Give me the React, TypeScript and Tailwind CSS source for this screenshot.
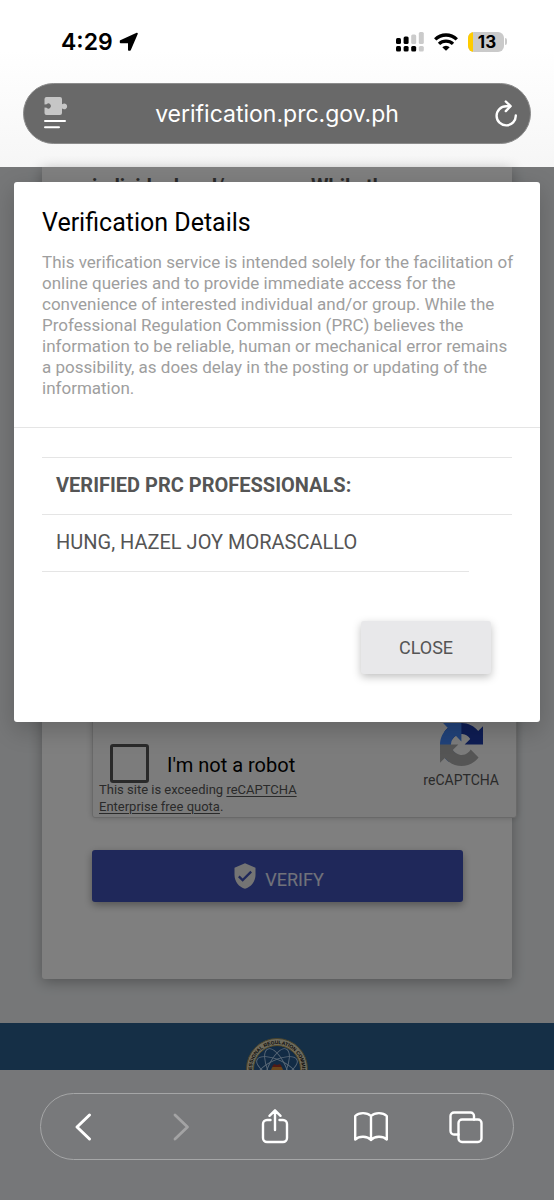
import React from "react";
import { MdVerifiedUser } from "react-icons/md";

function StatusBar() {
  return (
    <div className="flex h-[83px] items-center justify-between pl-[61px] pr-[47px]">
      <div className="flex items-center gap-1.5 text-black">
        <span className="font-['Inter'] text-[23px] font-semibold leading-7">4:29</span>
        <svg width="20" height="20" viewBox="0 0 20 20" fill="currentColor" stroke="currentColor" strokeWidth="1.6" strokeLinejoin="round" aria-hidden="true">
          <path d="M1.600 9 18 1.600 11 18h-1.200V10.400H1.600Z" />
        </svg>
      </div>
      <div className="flex items-center gap-2.5">
        <svg width="28" height="20" viewBox="0 0 28 20" aria-hidden="true">
          <g fill="#000">
            <rect x="0" y="6" width="5" height="6" rx="1.500" />
            <rect x="7.600" y="4.500" width="5" height="7.500" rx="1.500" />
            <rect x="0" y="14" width="5" height="5.500" rx="1.500" />
            <rect x="7.600" y="14" width="5" height="5.500" rx="1.500" />
            <rect x="15.200" y="14" width="5" height="5.500" rx="1.500" />
          </g>
          <g fill="#cbcbcb">
            <rect x="15.200" y="2.500" width="5" height="9.500" rx="1.500" />
            <rect x="22.800" y="0" width="5" height="12" rx="1.500" />
            <rect x="22.800" y="14" width="5" height="5.500" rx="1.500" />
          </g>
        </svg>
        <svg width="24" height="18" viewBox="0 0 24 18" fill="none" stroke="#000" strokeWidth="3.3" aria-hidden="true">
          <path d="M1.200 6.400a15.500 15.500 0 0 1 21.600 0" />
          <path d="M5 10.900a10 10 0 0 1 14 0" />
          <path d="M12 17.800 8.300 14.200a5.300 5.300 0 0 1 7.400 0Z" fill="#000" stroke="none" />
        </svg>
        <div className="flex items-center gap-px">
          <div className="flex h-5 w-9 items-center overflow-hidden rounded-md bg-[#cacaca]">
            <span className="h-full w-[5px] bg-[#ffcc00]" />
            <span className="flex-1 pr-[3px] text-center font-['Inter'] text-[17px] font-bold leading-5 text-black">13</span>
          </div>
          <span className="h-[7px] w-0.5 rounded-r-full bg-[#cacaca]" />
        </div>
      </div>
    </div>
  );
}

function AddressBar() {
  return (
    <div className="mx-[23px] flex h-[61px] items-center justify-between rounded-full border border-[#8c8c8c] bg-[#696969] pl-5 pr-3 text-white">
      <button aria-label="Page menu" className="w-6">
        <svg width="24" height="33" viewBox="0 0 24 33" aria-hidden="true">
          <path fill="#c6c6c6" d="M2.500 0h13.500a2 2 0 0 1 2 2v5.200l1.300-.4a2.800 2.800 0 1 1 0 5.200l-1.300-.4V16a2 2 0 0 1-2 2H2.500a2 2 0 0 1-2-2v-5.500l2.200.3a2.500 2.500 0 1 0 0-3.600L.5 7.500V2a2 2 0 0 1 2-2Z" />
          <path d="M1 24h20M1 30.300h14" stroke="#fff" strokeWidth="2" strokeLinecap="round" />
        </svg>
      </button>
      <span className="pr-2 font-['Inter'] text-[23px] leading-7">verification.prc.gov.ph</span>
      <button aria-label="Reload">
        <svg width="24" height="28" viewBox="0 0 24 28" fill="none" stroke="#fff" strokeWidth="2.400" strokeLinecap="round" strokeLinejoin="round" aria-hidden="true">
          <path d="M16 6.200H12.200A9.600 9.600 0 1 0 21.800 15.500" />
          <path d="m11.800 1.500 4.800 4.700-4.800 4.900" />
        </svg>
      </button>
    </div>
  );
}

function RecaptchaLogo() {
  return (
    <svg width="43" height="43" viewBox="0 0 64 64" aria-hidden="true">
      <path fill="#1c3aa9" d="M64 31.955l-.033-1.370V4.687l-7.160 7.160C50.948 4.674 42.033.093 32.050.093c-10.400 0-19.622 4.960-25.458 12.640l11.736 11.860a15.550 15.550 0 0 1 4.754-5.334c2.050-1.600 4.952-2.906 8.968-2.906.485 0 .860.057 1.135.163 4.976.393 9.288 3.140 11.828 7.124l-8.307 8.307L64 31.953" />
      <path fill="#4285f4" d="M31.862.094l-1.370.033H4.594l7.160 7.160C4.580 13.147 0 22.060 0 32.046c0 10.400 4.960 19.622 12.640 25.458L24.500 45.768a15.550 15.550 0 0 1-5.334-4.754c-1.600-2.050-2.906-4.952-2.906-8.968 0-.485.057-.860.163-1.135.393-4.976 3.140-9.288 7.124-11.828l8.307 8.307L31.860.095" />
      <path fill="#ababab" d="M.001 32.045l.033 1.370v25.898l7.160-7.160c5.860 7.173 14.774 11.754 24.760 11.754 10.400 0 19.622-4.960 25.458-12.640l-11.736-11.860a15.550 15.550 0 0 1-4.754 5.334c-2.050 1.600-4.952 2.906-8.968 2.906-.485 0-.860-.057-1.135-.163-4.976-.393-9.288-3.140-11.828-7.124l8.307-8.307c-10.522.040-22.400.066-27.295-.005" />
    </svg>
  );
}

function Recaptcha() {
  return (
    <div className="-mr-[54px] flex h-[110px] justify-between rounded-[3px] border border-[#d3d3d3] bg-[#f9f9f9] pl-1.5 pr-[17px] shadow-[0_0_6px_rgba(0,0,0,0.2)]">
      <div className="pt-9">
        <label className="flex h-9 items-center gap-[18px] pl-[11px] text-xl text-black">
          <input
            type="checkbox"
            className="size-[39px] appearance-none rounded-[3px] border-[3px] border-[#555]"
          />
          <span className="pt-1">I'm not a robot</span>
        </label>
        <p className="w-[215px] text-[13px] leading-[17px] text-[#555]">
          This site is exceeding{" "}
          <a href="#quota" className="underline underline-offset-2">reCAPTCHA Enterprise free quota</a>.
        </p>
      </div>
      <div className="flex flex-col items-center pt-[14px]">
        <RecaptchaLogo />
        <span className="pt-1 text-sm leading-5 text-[#555]">reCAPTCHA</span>
      </div>
    </div>
  );
}

function Seal() {
  return (
    <svg width="62" height="62" viewBox="0 0 62 62" className="shrink-0" aria-hidden="true">
      <circle cx="31" cy="31" r="30.500" fill="#ddd6b8" stroke="#8f8455" />
      <circle cx="31" cy="31" r="23.500" fill="#24568b" stroke="#b39b52" />
      <defs>
        <path id="seal-arc" d="M8.500 42A25 25 0 1 1 53.500 42" />
      </defs>
      <text className="font-['Liberation_Sans'] text-[5px] font-bold" fill="#111">
        <textPath href="#seal-arc" startOffset="50%" textAnchor="middle">PROFESSIONAL REGULATION COMMISSION</textPath>
      </text>
      <g fill="none" stroke="#b5d2ee" strokeWidth="0.900">
        <ellipse cx="31" cy="31" rx="22" ry="9" transform="rotate(25 31 31)" />
        <ellipse cx="31" cy="31" rx="22" ry="9" transform="rotate(-25 31 31)" />
        <ellipse cx="31" cy="31" rx="22" ry="9" transform="rotate(65 31 31)" />
        <ellipse cx="31" cy="31" rx="22" ry="9" transform="rotate(-65 31 31)" />
      </g>
      <circle cx="31" cy="33" r="6" fill="#d58a35" />
      <path d="m26 29 2-3 3 1 3-1 2 3Z" fill="#a3342a" />
    </svg>
  );
}

function VerificationPage() {
  return (
    <div className="bg-[#eceff1]">
      <div className="mx-[42px] rounded-b-[3px] bg-white pl-[50px] pr-[49px] pb-[77px] shadow-[0_3px_14px_rgba(0,0,0,0.3)]">
        <p className="h-[541px] overflow-hidden pt-[7px] text-xl font-bold leading-6 text-[#555]">
          individual and/or group. While the
        </p>
        <Recaptcha />
        <button className="mt-8 flex h-[52px] w-full items-center justify-center gap-1.5 rounded-[3px] bg-[#3f51b5] text-lg text-white/85 shadow-[0_3px_8px_rgba(0,0,0,0.35)]">
          <MdVerifiedUser size={28} color="#e8e8e8" aria-hidden="true" />
          <span className="pt-2">VERIFY</span>
        </button>
      </div>
      <footer className="mt-11 flex h-[47px] justify-center overflow-hidden bg-[#2a5f8c] pt-[15px]">
        <Seal />
      </footer>
    </div>
  );
}

function VerificationDialog() {
  return (
    <div
      role="dialog"
      aria-labelledby="dialog-title"
      className="absolute inset-x-3.5 top-[15px] rounded-[3px] bg-white shadow-[0_8px_24px_rgba(0,0,0,0.2)]"
    >
      <div className="border-b border-[#e5e5e5] px-7 pb-7 pt-[25px]">
        <h2 id="dialog-title" className="text-[25px] leading-8 text-black">Verification Details</h2>
        <p className="-mr-2 pt-[13px] text-[17px] leading-[21px] text-[#9e9e9e]">
          This verification service is intended solely for the facilitation of online queries and to
          provide immediate access for the convenience of interested individual and/or group. While the
          Professional Regulation Commission (PRC) believes the information to be reliable, human or
          mechanical error remains a possibility, as does delay in the posting or updating of the
          information.
        </p>
      </div>
      <div className="px-7 pb-12 pt-[29px]">
        <table className="w-full border-collapse text-left text-xl leading-7 text-[#555]">
          <thead>
            <tr>
              <th colSpan={2} className="h-[57px] border-y border-[#e5e5e5] px-3.5 pb-0.5 font-bold">
                VERIFIED PRC PROFESSIONALS:
              </th>
            </tr>
          </thead>
          <tbody>
            <tr>
              <td className="h-[57px] border-b border-[#e5e5e5] px-3.5 pb-0.5">HUNG, HAZEL JOY MORASCALLO</td>
              <td className="w-[43px]" />
            </tr>
          </tbody>
        </table>
        <div className="flex justify-end pr-[21px] pt-[49px]">
          <button className="h-[53px] w-[130px] rounded-[3px] bg-[#e8e8ea] text-lg text-[#555] shadow-[0_3px_8px_rgba(0,0,0,0.25)]">
            CLOSE
          </button>
        </div>
      </div>
    </div>
  );
}

function Toolbar() {
  const icon = {
    fill: "none",
    stroke: "currentColor",
    strokeWidth: 2.4,
    strokeLinecap: "round" as const,
    strokeLinejoin: "round" as const,
    "aria-hidden": true,
  };
  return (
    <nav className="bg-[#767779] px-10 pb-10 pt-[23px]">
      <div className="flex h-[67px] items-center justify-between rounded-full border border-[#a5a6a7] bg-[#78797b] pl-[26px] pr-[30px] text-white">
        <button aria-label="Back">
          <svg width="34" height="36" viewBox="0 0 34 36" {...icon} strokeWidth={3}><path d="M22.500 6 10 18l12.500 12" /></svg>
        </button>
        <button aria-label="Forward" className="text-[#a3a3a4]">
          <svg width="34" height="36" viewBox="0 0 34 36" {...icon} strokeWidth={2.8}><path d="m12 6 12.500 12L12 30" /></svg>
        </button>
        <button aria-label="Share">
          <svg width="34" height="36" viewBox="0 0 34 36" {...icon}>
            <path d="M12.500 11H9a4 4 0 0 0-4 4v14a4 4 0 0 0 4 4h16a4 4 0 0 0 4-4V15a4 4 0 0 0-4-4h-3.500M17 21V1.500M11.500 6.800 17 1.300l5.500 5.500" />
          </svg>
        </button>
        <button aria-label="Bookmarks">
          <svg width="34" height="36" viewBox="0 0 34 36" {...icon}>
            <path d="M17 7C13 3.200 5 3.200 1.200 7V30.500c4-3.700 12-3.700 15.800.5 3.800-4.200 11.800-4.200 15.800-.5V7C29 3.200 21 3.200 17 7ZM17 7v24" />
          </svg>
        </button>
        <button aria-label="Tabs">
          <svg width="34" height="36" viewBox="0 0 34 36" {...icon}>
            <rect x="9.500" y="10.500" width="23" height="22.500" rx="3.500" />
            <path d="M9.500 25.500H5a3.500 3.500 0 0 1-3.500-3.500V7A3.500 3.500 0 0 1 5 3.500h16.500A3.500 3.500 0 0 1 25 7v3.500" />
          </svg>
        </button>
      </div>
    </nav>
  );
}

export default function App() {
  return (
    <div className="min-h-screen bg-[#767779] font-['Roboto',sans-serif]">
      <header className="bg-linear-to-b from-white from-30% to-[#f6f6f6] pb-[23px]">
        <StatusBar />
        <AddressBar />
      </header>
      <main className="relative">
        <VerificationPage />
        <div className="absolute inset-0 bg-black/50" />
        <VerificationDialog />
      </main>
      <Toolbar />
    </div>
  );
}
